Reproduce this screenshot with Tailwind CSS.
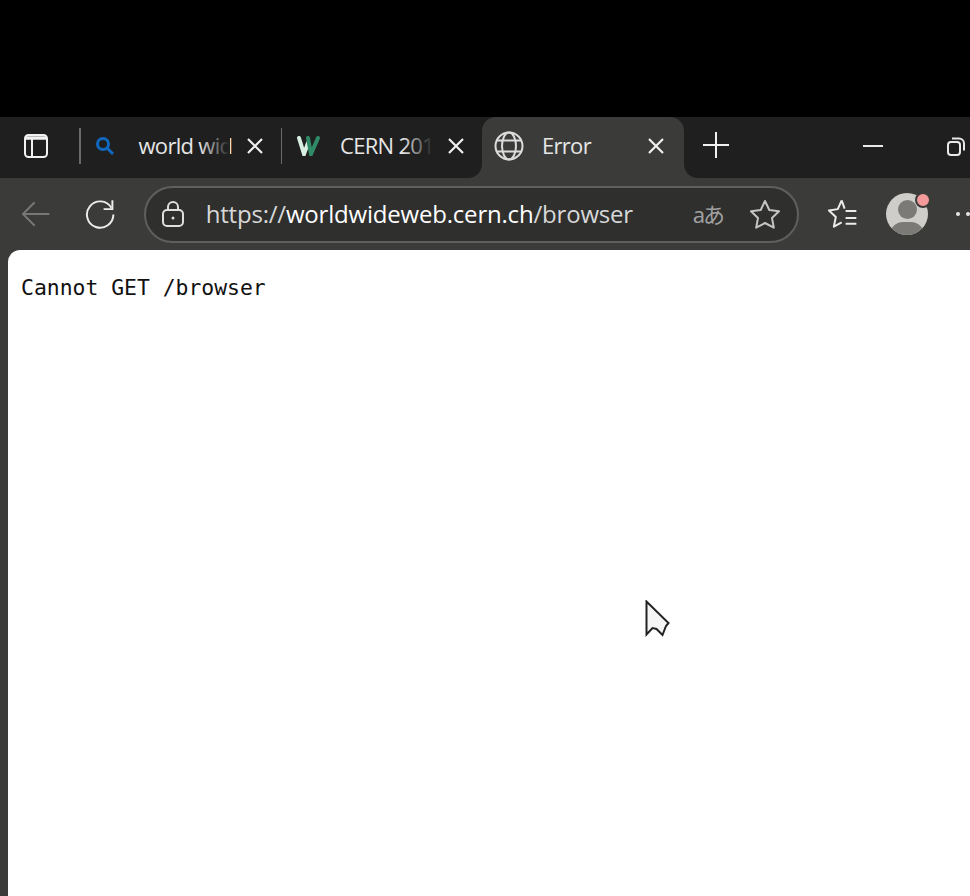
<!DOCTYPE html>
<html lang="en">

<head>
    <meta charset="UTF-8">
    <title>Error</title>
    <script src="https://cdn.jsdelivr.net/npm/@tailwindcss/browser@4"></script>
</head>

<body class="bg-black overflow-hidden">
    <div class="relative w-[970px] h-[896px] flex flex-col overflow-hidden font-['Open_Sans',sans-serif]">
        <div class="h-[117px] bg-black"></div>

        <!-- tab strip -->
        <div class="h-[61px] flex shrink-0 bg-[linear-gradient(#1f1f1f_50%,#3b3c3a_50%)]">
            <div class="w-[482px] h-full bg-[#1f1f1f] rounded-br-[14px] flex items-center pb-[3px] shrink-0">
                <div class="w-[79px] flex pl-[23px]">
                    <svg width="26" height="26" viewBox="0 0 26 26" fill="none" stroke="#f2f2f2" stroke-width="2">
                        <rect x="2" y="2" width="22" height="22" rx="3.5" />
                        <path d="M2 5h22" stroke-width="3.500" />
                        <path d="M9 6v18" />
                    </svg>
                </div>
                <div class="w-[1.5px] h-[36px] bg-[#6a6a6a] shrink-0"></div>

                <div class="w-[200px] flex items-center pl-[14px] shrink-0">
                    <svg width="20" height="20" viewBox="0 0 20 20" fill="none" stroke="#1068bf" stroke-width="3">
                        <circle cx="8" cy="8" r="5.5" />
                        <path d="M12 12l6 6" />
                    </svg>
                    <div class="relative ml-[24px] mb-[3px] w-[91px] whitespace-nowrap text-[22px] leading-[30px] tracking-[-0.7px] text-[#e6e6e6]">
                        world wid
                        <div class="absolute inset-y-0 right-0 w-[30px] bg-gradient-to-r from-transparent to-[#1f1f1f]"></div>
                    </div>
                    <svg class="ml-[16px]" width="18" height="18" viewBox="0 0 18 18" stroke="#f0f0f0" stroke-width="2.2">
                        <path d="M2 2l14 14M16 2L2 16" />
                    </svg>
                </div>
                <div class="w-[1.5px] h-[36px] bg-[#6a6a6a] shrink-0"></div>

                <div class="w-[200px] flex items-center pl-[14px] shrink-0">
                    <svg width="24" height="20" viewBox="0 0 24 20" fill="none" stroke-linecap="round">
                        <path d="M3 2l5 16 4-11" stroke="#d8efe4" stroke-width="4" />
                        <path d="M12 2l3 16 7-16" stroke="#2f8a68" stroke-width="4" />
                    </svg>
                    <div class="relative ml-[20px] mb-[3px] w-[93px] whitespace-nowrap text-[22px] leading-[30px] tracking-[-0.7px] text-[#e6e6e6]">
                        CERN 201
                        <div class="absolute inset-y-0 right-0 w-[30px] bg-gradient-to-r from-transparent to-[#1f1f1f]"></div>
                    </div>
                    <svg class="ml-[14px]" width="18" height="18" viewBox="0 0 18 18" stroke="#f0f0f0" stroke-width="2.2">
                        <path d="M2 2l14 14M16 2L2 16" />
                    </svg>
                </div>
            </div>

            <!-- active tab -->
            <div class="relative w-[202px] h-full bg-[#3b3c3a] rounded-t-[14px] flex items-center pl-[12px] pb-[3px] shrink-0">
                <svg width="30" height="30" viewBox="0 0 30 30" fill="none" stroke="#dcdcdc" stroke-width="2">
                    <circle cx="15" cy="15" r="13.5" />
                    <ellipse cx="15" cy="15" rx="7" ry="13.5" />
                    <path d="M3 9.5h24M3 20.5h24" />
                </svg>
                <span class="ml-[18px] mb-[3px] text-[22px] leading-[30px] tracking-[-0.7px] text-[#e6e6e6]">Error</span>
                <svg class="absolute left-[165px] top-[20px]" width="18" height="18" viewBox="0 0 18 18" stroke="#f0f0f0" stroke-width="2.2">
                    <path d="M2 2l14 14M16 2L2 16" />
                </svg>
            </div>

            <div class="flex-1 h-full bg-[#1f1f1f] rounded-bl-[14px] flex items-center pb-[3px]">
                <svg class="ml-[19px] mb-[2px] shrink-0" width="26" height="26" viewBox="0 0 26 26" stroke="#f0f0f0" stroke-width="2">
                    <path d="M13 0v26M0 13h26" />
                </svg>
                <svg class="ml-[134px] shrink-0" width="20" height="2" viewBox="0 0 20 2" stroke="#e8e8e8" stroke-width="2">
                    <path d="M0 1h20" />
                </svg>
                <svg class="ml-[64px] shrink-0" width="18" height="19" viewBox="0 0 18 19" fill="none" stroke="#e8e8e8" stroke-width="2">
                    <rect x="1" y="5" width="12" height="13" rx="3" />
                    <path d="M5 1.500h7a5 5 0 0 1 5 5v7" />
                </svg>
            </div>
        </div>

        <!-- toolbar -->
        <div class="h-[72px] bg-[#3b3c3a] flex items-center shrink-0 pl-[21px]">
            <svg width="30" height="28" viewBox="0 0 30 28" fill="none" stroke="#777876" stroke-width="2">
                <path d="M29 14H2M14 2L2 14l12 12" />
            </svg>
            <svg class="ml-[35px]" width="31" height="31" viewBox="0 0 31 31" fill="none" stroke="#ececec" stroke-width="2">
                <path d="M27 8.5A13.5 13.5 0 1 0 29 15.500" />
                <path d="M28 1v9h-9" />
            </svg>
            <!-- address bar -->
            <div class="ml-[28px] w-[655px] h-[57px] rounded-full bg-[#2f2f2e] border-2 border-[#5f5f5f] flex items-center pl-[16px] shrink-0">
                <svg width="22" height="26" viewBox="0 0 22 26" fill="none" stroke="#dedede" stroke-width="2">
                    <rect x="1" y="9" width="20" height="16" rx="4" />
                    <path d="M6 9V6a5 5 0 0 1 10 0v3" />
                    <circle cx="11" cy="17" r="1.500" fill="#dedede" stroke="none" />
                </svg>
                <div class="ml-[22px] w-[470px] whitespace-nowrap text-[24px] leading-[32px] tracking-[-0.2px] text-[#d8d8d8]">https://<span class="text-white">worldwideweb.cern.ch</span>/browser</div>
                <div class="ml-[17px] text-[22px] leading-[28px] text-[#a0a0a0] font-['Noto_Sans','Noto_Sans_CJK_JP',sans-serif] tracking-[-2px] w-[40px] whitespace-nowrap">aあ</div>
                <svg class="ml-[16px]" width="32" height="30" viewBox="0 0 32 30" fill="none" stroke="#c4c4c4" stroke-width="2" stroke-linejoin="round">
                    <path d="M16 2l4.300 9 9.700 1.300-7 6.700 1.800 9.700L16 24l-8.800 4.700L9 19l-7-6.700L11.700 11z" />
                </svg>
            </div>
            <svg class="ml-[28px]" width="32" height="32" viewBox="0 0 32 32" fill="none" stroke="#ececec" stroke-width="2" stroke-linejoin="round">
                <path d="M15 2l-4 9-9 1.500 7 6.500-2 10 8-4.500M18 10.500l-3-8.500" />
                <path d="M19 13h11M19 20h11M19 26h11" />
            </svg>
            <div class="relative ml-[28px] w-[42px] h-[42px] rounded-full bg-[#cfcdc9] overflow-hidden shrink-0">
                <div class="mx-auto mt-[7px] w-[19px] h-[19px] rounded-full bg-[#7b7a76]"></div>
                <div class="mx-auto mt-[3px] w-[34px] h-[26px] rounded-full bg-[#7b7a76]"></div>
            </div>
            <div class="w-[16px] h-[16px] rounded-full bg-[#f49a9a] border-2 border-[#3b3c3a] -ml-[13px] -mt-[28px] z-10 shrink-0"></div>
            <div class="ml-[25px] flex gap-[6px] shrink-0">
                <div class="w-[4px] h-[4px] rounded-full bg-[#e8e8e8]"></div>
                <div class="w-[4px] h-[4px] rounded-full bg-[#e8e8e8]"></div>
            </div>
        </div>

        <!-- page -->
        <div class="flex-1 bg-[#3b3c3a] pl-[8px]">
            <div class="h-full bg-white rounded-tl-[12px] pt-[24px] pl-[13px]">
                <pre class="font-['DejaVu_Sans_Mono',monospace] text-[21.400px] leading-[28px] text-[#111111]">Cannot GET /browser</pre>
            </div>
        </div>

        <!-- mouse cursor -->
        <svg class="absolute left-[645px] top-[600px]" width="26" height="38" viewBox="0 0 26 38" fill="#f6f6f6" stroke="#222222" stroke-width="2">
            <path d="M1.500 1.500v33l6-6.500 4 1 6 6 3.500-9 2.500-3z" />
        </svg>
    </div>
</body>

</html>
